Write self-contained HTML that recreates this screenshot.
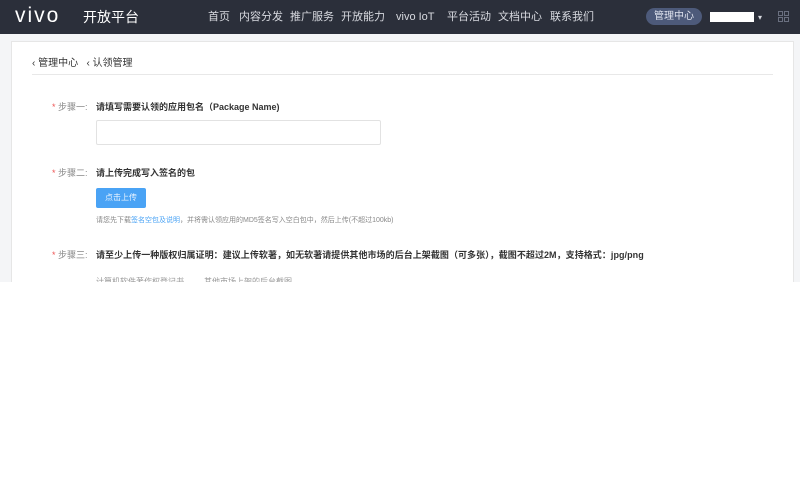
<!DOCTYPE html>
<html><head><meta charset="utf-8"><style>
body{margin:0;width:800px;height:483px;background:#fff;font-family:"Liberation Sans","Noto Sans CJK SC",sans-serif;overflow:hidden;position:relative}
.hd{position:absolute;left:0;top:0;width:800px;height:34px;background:#2b2f3a;color:#e0e2e8}
.logo{position:absolute;left:15px;top:3px;font-size:21px;line-height:26px;letter-spacing:2px;color:#fff;font-weight:300}
.plat{position:absolute;left:83px;top:8px;font-size:14px;line-height:18px;color:#fff}
.nav{position:absolute;top:10px;font-size:11px;line-height:14px;color:#d8dae0}
.btn{position:absolute;left:646px;top:8px;width:56px;height:17px;border-radius:9px;background:#4d5a7a;color:#dfe3ee;font-size:10px;text-align:center;line-height:17px}
.user{position:absolute;left:710px;top:12px;width:44px;height:10px;background:#fff}
.wrap{position:absolute;left:0;top:34px;width:800px;height:248px;background:#f4f5f7;overflow:hidden}
.card{position:absolute;left:11px;top:7px;width:781px;height:260px;background:#fff;border:1px solid #e6e6e6}
.t{position:absolute;white-space:nowrap;line-height:12px}
</style></head><body>
<div class="hd">
<div class="logo">vivo</div><div class="plat">开放平台</div>
<div class="nav" style="left:208px">首页</div>
<div class="nav" style="left:239px">内容分发</div>
<div class="nav" style="left:290px">推广服务</div>
<div class="nav" style="left:341px">开放能力</div>
<div class="nav" style="left:396px">vivo IoT</div>
<div class="nav" style="left:447px">平台活动</div>
<div class="nav" style="left:498px">文档中心</div>
<div class="nav" style="left:550px">联系我们</div>
<div class="btn">管理中心</div><div class="user"></div>
<div class="nav" style="left:758px;top:11px;font-size:8px">▾</div>
<svg style="position:absolute;left:778px;top:11px" width="11" height="11"><g fill="none" stroke="#6a7080" stroke-width="1"><rect x=".5" y=".5" width="4" height="4"/><rect x="6.5" y=".5" width="4" height="4"/><rect x=".5" y="6.5" width="4" height="4"/><rect x="6.5" y="6.5" width="4" height="4"/></g></svg>
</div>
<div class="wrap"><div class="card">
<div class="t" style="left:20px;top:16px;font-size:10px;color:#333">‹ 管理中心 &nbsp; ‹ 认领管理</div>
<div style="position:absolute;left:20px;top:32px;width:741px;height:1px;background:#e8e8e8"></div>
<div class="t" style="left:40px;top:59px;font-size:9px;color:#888"><span style="color:#e55">*</span> 步骤一:</div>
<div class="t" style="left:84px;top:59px;font-size:9px;color:#333;font-weight:bold">请填写需要认领的应用包名（Package Name)</div>
<div style="position:absolute;left:84px;top:78px;width:283px;height:23px;border:1px solid #e2e2e2;border-radius:2px"></div>
<div class="t" style="left:40px;top:125px;font-size:9px;color:#888"><span style="color:#e55">*</span> 步骤二:</div>
<div class="t" style="left:84px;top:125px;font-size:9px;color:#333;font-weight:bold">请上传完成写入签名的包</div>
<div style="position:absolute;left:84px;top:146px;width:50px;height:20px;background:#4aa3f5;border-radius:2px;color:#e8f3ff;font-size:8px;text-align:center;line-height:20px">点击上传</div>
<div class="t" style="left:84px;top:173px;font-size:7px;color:#888">请您先下载<span style="color:#4aa3f5">签名空包及说明</span>，并将需认领应用的MD5签名写入空白包中，然后上传(不超过100kb)</div>
<div class="t" style="left:40px;top:207px;font-size:9px;color:#888"><span style="color:#e55">*</span> 步骤三:</div>
<div class="t" style="left:84px;top:207px;font-size:9px;letter-spacing:0.05px;color:#333;font-weight:bold">请至少上传一种版权归属证明：建议上传软著，如无软著请提供其他市场的后台上架截图（可多张），截图不超过2M，支持格式：jpg/png</div>
<div class="t" style="left:84px;top:234px;font-size:8px;color:#999">计算机软件著作权登记书 &nbsp; &nbsp; &nbsp; &nbsp; 其他市场上架的后台截图</div>
</div></div>
</body></html>
